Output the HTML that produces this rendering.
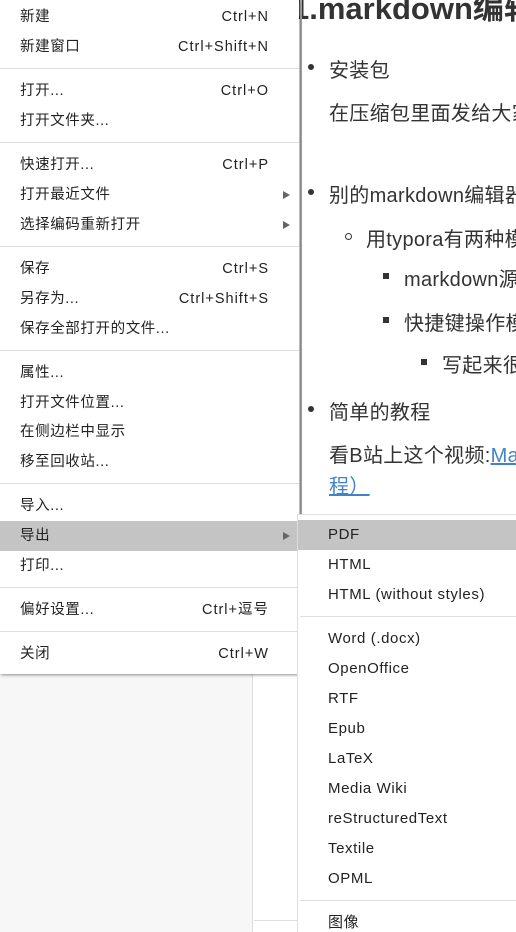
<!DOCTYPE html>
<html><head><meta charset="utf-8"><style>
*{margin:0;padding:0;box-sizing:border-box}
body{width:516px;height:932px;overflow:hidden;position:relative;background:#fff;font-family:"Liberation Sans","Noto Sans CJK SC",sans-serif;color:#333}
.a{position:absolute;white-space:nowrap}
.c{font-size:20px;color:#333;letter-spacing:0.3px}
.menu{position:absolute;left:0;top:0;width:299px;height:674px;background:#fff;box-shadow:1px 1px 3px rgba(0,0,0,.45);font-size:14.5px;color:#222;letter-spacing:0.6px}
.it{position:absolute;left:0;width:299px;height:30px;line-height:30px;padding-left:20px}
.it .k{position:absolute;right:30px;top:0;letter-spacing:1px}
.it .ar{position:absolute;left:283px;top:11px;width:0;height:0;border-left:7px solid #666;border-top:4.5px solid transparent;border-bottom:4.5px solid transparent}
.sep{position:absolute;left:0;width:299px;height:1px;background:#ddd}
.sub{position:absolute;left:297px;top:514px;width:219px;height:418px;background:#fff;border-left:1px solid #ddd;border-top:1px solid #ddd;font-size:15px;color:#222;letter-spacing:0.6px;overflow:hidden}
.si{position:absolute;left:0;width:219px;height:30px;line-height:30px;padding-left:30px}
.ssep{position:absolute;left:2px;width:217px;height:1px;background:#ddd}
.hl{background:#c4c4c4}
</style></head><body>
<div class="a" style="left:292px;top:-11px;font-size:31px;font-weight:bold;color:#333;line-height:40px">1.markdown编辑器</div>
<div style="position:absolute;left:300px;top:0;width:2px;height:514px;background:#aaa"></div>
<div class="a" style="left:308px;top:64px;width:6px;height:6px;border-radius:3px;background:#333"></div>
<div class="a c" style="left:329px;top:54px">安装包</div>
<div class="a c" style="left:329px;top:97px">在压缩包里面发给大家</div>
<div class="a" style="left:308px;top:189px;width:6px;height:6px;border-radius:3px;background:#333"></div>
<div class="a c" style="left:329px;top:179px">别的markdown编辑器</div>
<div class="a" style="left:345px;top:233px;width:7px;height:7px;border-radius:4px;border:1px solid #333"></div>
<div class="a c" style="left:366px;top:223px">用typora有两种模</div>
<div class="a" style="left:383px;top:273px;width:6px;height:6px;background:#333"></div>
<div class="a c" style="left:404px;top:263px">markdown源</div>
<div class="a" style="left:383px;top:317px;width:6px;height:6px;background:#333"></div>
<div class="a c" style="left:404px;top:307px">快捷键操作模</div>
<div class="a" style="left:421px;top:359px;width:6px;height:6px;background:#333"></div>
<div class="a c" style="left:442px;top:349px">写起来很</div>
<div class="a" style="left:308px;top:406px;width:6px;height:6px;border-radius:3px;background:#333"></div>
<div class="a c" style="left:329px;top:396px">简单的教程</div>
<div class="a c" style="left:329px;top:439px">看B站上这个视频:<span style="color:#4183c4;text-decoration:underline">Ma</span></div>
<div class="a c" style="left:329px;top:470px;color:#4183c4;text-decoration:underline">程）</div>
<div style="position:absolute;left:0;top:674px;width:253px;height:258px;background:#f7f7f7;border-right:1px solid #ddd"></div>
<div style="position:absolute;left:254px;top:920px;width:43px;height:1px;background:#ddd"></div>
<div class="menu">
<div class="it" style="top:2px">新建<span class="k">Ctrl+N</span></div>
<div class="it" style="top:32px">新建窗口<span class="k">Ctrl+Shift+N</span></div>
<div class="sep" style="top:68px"></div>
<div class="it" style="top:76px">打开...<span class="k">Ctrl+O</span></div>
<div class="it" style="top:106px">打开文件夹...</div>
<div class="sep" style="top:142px"></div>
<div class="it" style="top:150px">快速打开...<span class="k">Ctrl+P</span></div>
<div class="it" style="top:180px">打开最近文件<span class="ar"></span></div>
<div class="it" style="top:210px">选择编码重新打开<span class="ar"></span></div>
<div class="sep" style="top:246px"></div>
<div class="it" style="top:254px">保存<span class="k">Ctrl+S</span></div>
<div class="it" style="top:284px">另存为...<span class="k">Ctrl+Shift+S</span></div>
<div class="it" style="top:314px">保存全部打开的文件...</div>
<div class="sep" style="top:350px"></div>
<div class="it" style="top:358px">属性...</div>
<div class="it" style="top:388px">打开文件位置...</div>
<div class="it" style="top:417px">在侧边栏中显示</div>
<div class="it" style="top:447px">移至回收站...</div>
<div class="sep" style="top:483px"></div>
<div class="it" style="top:491px">导入...</div>
<div class="it hl" style="top:521px">导出<span class="ar"></span></div>
<div class="it" style="top:551px">打印...</div>
<div class="sep" style="top:587px"></div>
<div class="it" style="top:595px">偏好设置...<span class="k">Ctrl+逗号</span></div>
<div class="sep" style="top:631px"></div>
<div class="it" style="top:639px">关闭<span class="k">Ctrl+W</span></div>
</div>
<div class="sub">
<div class="si hl" style="top:5px">PDF</div>
<div class="si" style="top:35px">HTML</div>
<div class="si" style="top:65px">HTML (without styles)</div>
<div class="ssep" style="top:101px"></div>
<div class="si" style="top:109px">Word (.docx)</div>
<div class="si" style="top:139px">OpenOffice</div>
<div class="si" style="top:169px">RTF</div>
<div class="si" style="top:199px">Epub</div>
<div class="si" style="top:229px">LaTeX</div>
<div class="si" style="top:259px">Media Wiki</div>
<div class="si" style="top:289px">reStructuredText</div>
<div class="si" style="top:319px">Textile</div>
<div class="si" style="top:349px">OPML</div>
<div class="ssep" style="top:385px"></div>
<div class="si" style="top:393px">图像</div>
</div>
</body></html>
